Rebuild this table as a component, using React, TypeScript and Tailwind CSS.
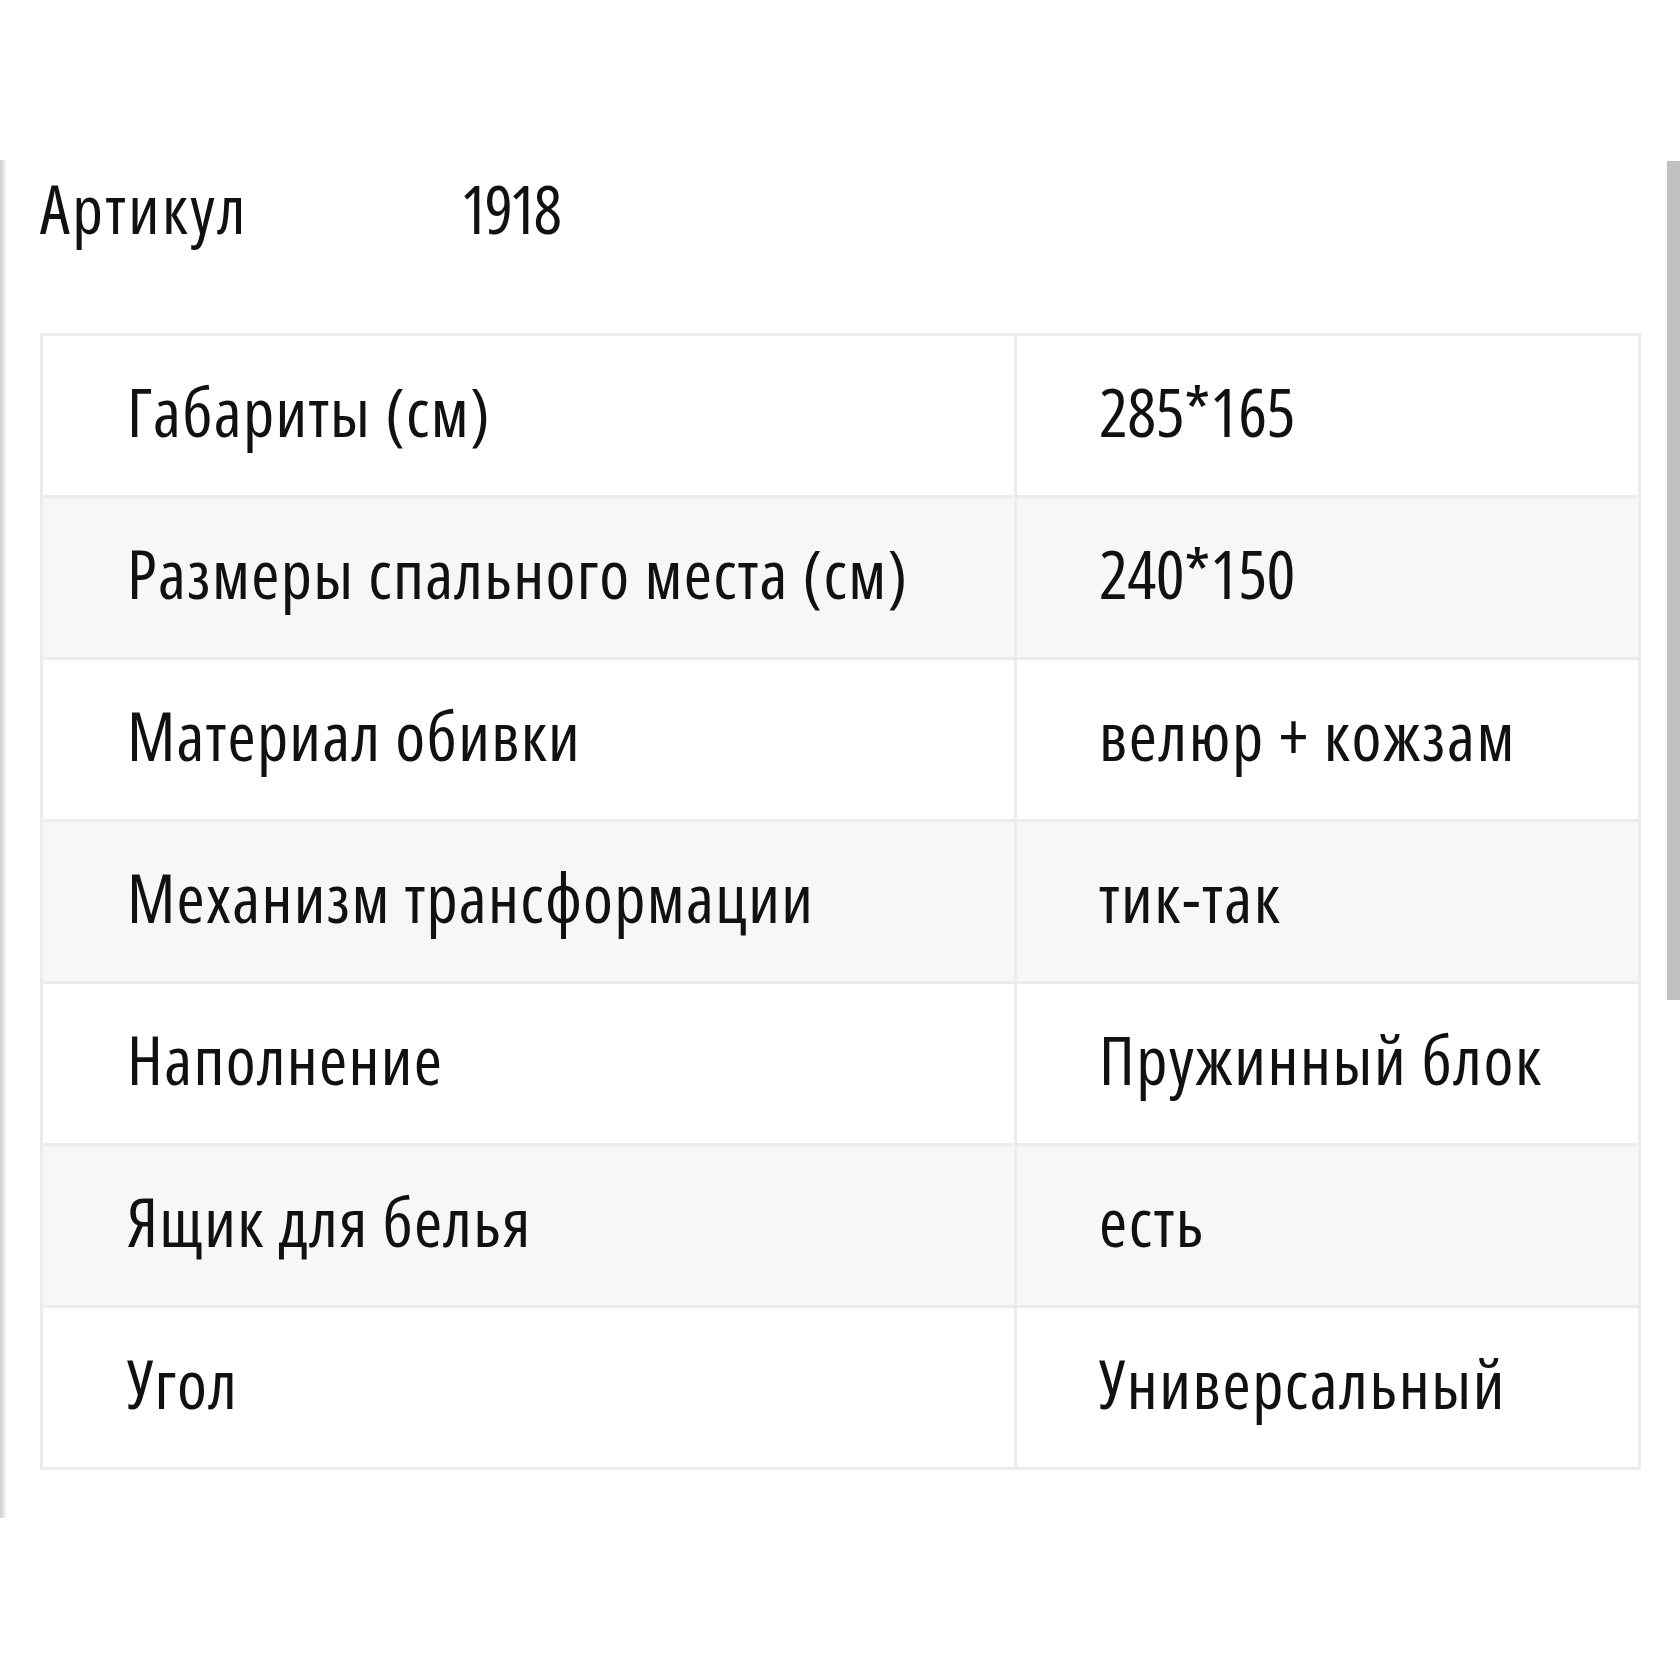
const specs: [string, string][] = [
  ['Габариты (см)', '285*165'],
  ['Размеры спального места (см)', '240*150'],
  ['Материал обивки', 'велюр + кожзам'],
  ['Механизм трансформации', 'тик-так'],
  ['Наполнение', 'Пружинный блок'],
  ['Ящик для белья', 'есть'],
  ['Угол', 'Универсальный'],
];

export default function App() {
  return (
    <div className="relative h-[1680px] bg-white font-['Open_Sans',sans-serif] font-stretch-[75%] text-[#111]">
      {/* scrollbar */}
      <div className="absolute right-0 top-[161px] h-[839px] w-[13px] bg-[#c1c1c1]" />

      <div className="pt-[160px]">
        <div className="flex">
          <div className="w-[7px] shrink-0 bg-gradient-to-r from-[#cfcfcf] to-white" />
          <div className="flex-1 pl-[33px] pb-[48px]">
            <div className="flex pt-[15px] text-[67px] leading-none">
              <span className="w-[420px] tracking-[2.6px]">Артикул</span>
              <span className="tracking-[-4px]">1918</span>
            </div>

            <div className="mt-[91px] w-[1601px] border-[3px] border-[#ececec]">
              {specs.map(([label, value], i) => (
                <div
                  key={label}
                  className={`grid grid-cols-[974px_1fr] ${i % 2 === 1 ? 'bg-[#f7f7f7]' : 'bg-white'} ${i > 0 ? 'h-[162px] border-t-[3px] border-[#ececec]' : 'h-[159px]'}`}
                >
                  <div className="flex items-center border-r-[3px] border-[#ececec] pl-[84px] pb-[9px] text-[68px] leading-none tracking-[1.3px]">
                    {label}
                  </div>
                  <div
                    className={`flex items-center pl-[82px] pb-[9px] text-[68px] leading-none ${/^\d/.test(value) ? 'tracking-[-0.6px]' : 'tracking-[1.6px]'}`}
                  >
                    {value}
                  </div>
                </div>
              ))}
            </div>
          </div>
        </div>
      </div>
    </div>
  );
}
